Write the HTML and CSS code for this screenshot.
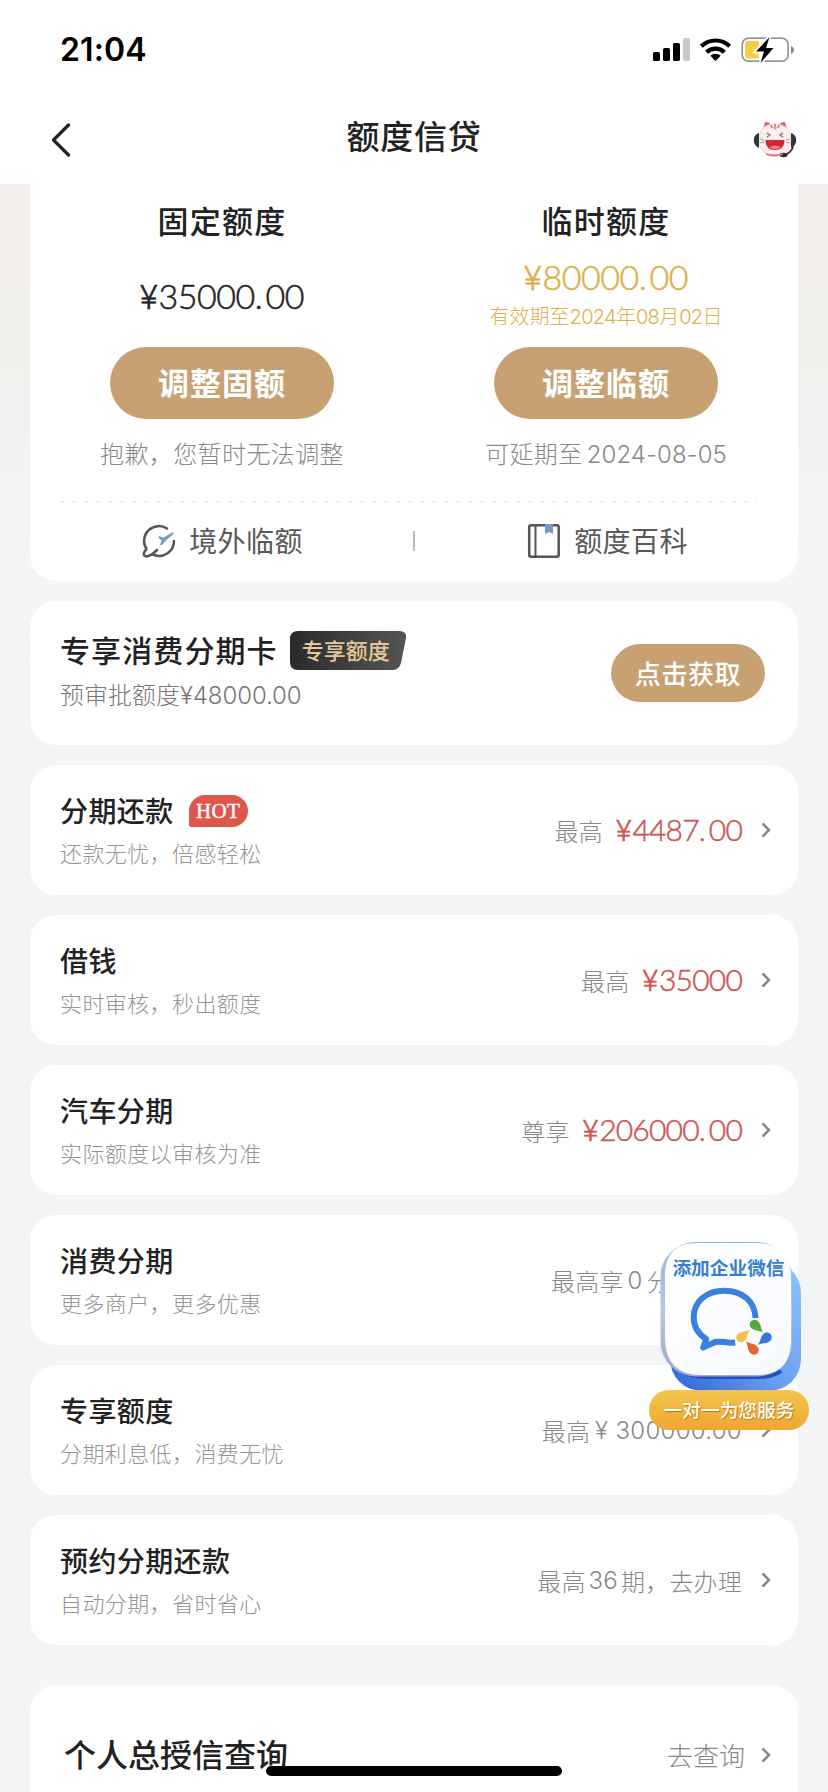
FILE: index.html
```html
<!DOCTYPE html>
<html lang="zh-CN">
<head>
<meta charset="utf-8">
<title>额度信贷</title>
<link rel="stylesheet" href="styles.css">
</head>
<body>
<div class="screen">
  <header class="header">
    <div class="status">
      <span class="clock">21:04</span>
      <svg class="status-icons" width="144" height="28" viewBox="0 0 144 28">
        <rect x="1" y="16" width="7" height="9" rx="1.6"/>
        <rect x="11" y="12" width="7" height="13" rx="1.6"/>
        <rect x="21" y="7" width="7" height="18" rx="1.6"/>
        <rect x="31" y="2" width="7" height="23" rx="1.6" fill="#c9c9c9"/>
        <g fill="none" stroke="#000" stroke-width="4.2">
          <path d="M49.3 10.2a20.5 20.5 0 0 1 28.4 0"/>
          <path d="M54.6 16.2a13 13 0 0 1 17.8 0"/>
        </g>
        <path d="M63.500 25l-5.200-5.200a7.500 7.500 0 0 1 10.400 0z"/>
        <rect x="90.200" y="2.200" width="46" height="23" rx="6.500" fill="#fff" stroke="#999" stroke-width="1.800"/>
        <path d="M96.500 5H107v17.500h-10.500a3.500 3.500 0 0 1-3.500-3.500V8.500a3.500 3.500 0 0 1 3.500-3.500z" fill="#f4ce46"/>
        <path d="M139 10c4 1.500 4 6.500 0 8z" fill="#888"/>
        <path d="M117.500 1L104 15.500h8L108.500 27 121.500 12h-7.500z" stroke="#fff" stroke-width="3.500" paint-order="stroke"/>
      </svg>
    </div>
    <div class="nav">
      <svg class="back" width="20" height="34" viewBox="0 0 20 34"><path d="M17.500 2L2.500 17l15 15" fill="none" stroke="#222" stroke-width="3.200" stroke-linecap="round" stroke-linejoin="round"/></svg>
      <h1 class="nav-title">额度信贷</h1>
      <svg class="mascot" width="44" height="38" viewBox="0 0 44 38">
        <path d="M10 9L12 2q5 0 7 4zM34 9L32 2q-5 0-7 4z" fill="#d9606c"/>
        <path d="M22 4C34 4 38 12 38 20s-5 15-16 15S6 29 6 20 10 4 22 4z" fill="#fbeeed" stroke="#f0d3d3" stroke-width=".8"/>
        <path d="M18 5l1 3M22 4v3M26 5l-1 3" stroke="#d9606c" stroke-width="1.500"/>
        <ellipse cx="22" cy="8" rx="1.500" ry="1.800" fill="#d6b162"/>
        <path d="M6 13c-7 2-7 12 0 15zM38 13c7 2 7 12 0 15z" fill="#35333a"/>
        <path d="M40 27q-2 6-9 8" fill="none" stroke="#35333a" stroke-width="1.800"/>
        <ellipse cx="30.500" cy="35" rx="4" ry="2.200" fill="#2d2a2e"/>
        <path d="M14 13l3 2-3 2M30 13l-3 2 3 2" fill="none" stroke="#666" stroke-width="1.100"/>
        <path d="M7 19l4 1M7 23l4-1M37 19l-4 1M37 23l-4-1" stroke="#888" stroke-width=".8"/>
        <path d="M12.500 20h19c0 7-4 10-9.500 10s-9.500-3-9.500-10z" fill="#cf2734"/>
        <path d="M16 27q6-3 12 0-6 4.500-12 0z" fill="#f07b80"/>
        <path d="M13 34q8 3 17 0" fill="none" stroke="#e2727a" stroke-width="1.800"/>
      </svg>
    </div>
  </header>

  <main class="content">
    <section class="card quota">
      <div class="quota-cols">
        <div class="quota-col">
          <h2 class="quota-name">固定额度</h2>
          <div class="quota-value"><div class="money"><span class="yen">¥</span>35000<span class="dot">.</span>00</div></div>
          <button class="btn-large">调整固额</button>
          <p class="quota-note">抱歉，您暂时无法调整</p>
        </div>
        <div class="quota-col">
          <h2 class="quota-name">临时额度</h2>
          <div class="quota-value gold"><div class="money"><span class="yen">¥</span>80000<span class="dot">.</span>00</div><div class="valid">有效期至<b>2024</b>年<b>08</b>月<b>02</b>日</div></div>
          <button class="btn-large">调整临额</button>
          <p class="quota-note">可延期至<span class="num date">2024-08-05</span></p>
        </div>
      </div>
      <svg class="dashes" width="698" height="2" viewBox="0 0 698 2"><path d="M0 1h698" stroke="#ececec" stroke-width="1.600" stroke-dasharray="5 7"/></svg>
      <div class="links">
        <a class="link">
          <svg width="34" height="36" viewBox="0 0 34 36" fill="none" stroke="#555" stroke-width="2.500" stroke-linecap="round" stroke-linejoin="round">
            <path d="M25 5.500A14.800 14.800 0 0 0 4.500 26c-3 3-3.500 6-1.500 7 3 1 8-2 12-6"/>
            <path d="M11 31.500A14.800 14.800 0 0 0 32 18"/>
            <path d="M17 13l4.500 1.500L31 9c1 1 .5 2-.5 3L24 17.500 20 22h-2l1.500-4.500L16.500 15z" fill="#789dc8" stroke="none"/>
          </svg>
          <span>境外临额</span>
        </a>
        <i class="split"></i>
        <a class="link">
          <svg width="34" height="36" viewBox="0 0 34 36">
            <rect x="2.200" y="2.200" width="29.500" height="31.500" rx="2" fill="none" stroke="#555" stroke-width="2.500"/>
            <path d="M8.500 2v31.500" stroke="#555" stroke-width="2"/>
            <path d="M18 1h8v10l-4-2-4 2z" fill="#7899c4"/>
          </svg>
          <span>额度百科</span>
        </a>
      </div>
    </section>

    <section class="card promo">
      <div class="promo-text">
        <div class="promo-head">
          <h2 class="promo-title">专享消费分期卡</h2>
          <span class="tag"><svg class="tag-bg" width="117" height="39" viewBox="0 0 117 39"><defs><linearGradient id="tagfill" x1="0" x2="1"><stop stop-color="#2a2a2a"/><stop offset="1" stop-color="#555"/></linearGradient></defs><path d="M8 0h101q8 0 7 7l-5 25q-2 7-8 7H8q-8 0-8-8V8q0-8 8-8z" fill="url(#tagfill)"/></svg><span class="tag-label">专享额度</span></span>
        </div>
        <p class="promo-sub">预审批额度<span class="num promo-num">¥48000.00</span></p>
      </div>
      <button class="btn-small">点击获取</button>
    </section>

    <section class="card row">
      <div class="row-text"><h3 class="row-title">分期还款<span class="hot">HOT</span></h3><p class="row-sub">还款无忧，倍感轻松</p></div>
      <div class="row-right"><span>最高</span><span class="amount"><span class="yen">¥</span>4487<span class="dot">.</span>00</span></div>
      <svg class="chev" width="10" height="16" viewBox="0 0 10 16"><path d="M1.500 1.500L8 8l-6.500 6.500"/></svg>
    </section>
    <section class="card row">
      <div class="row-text"><h3 class="row-title">借钱</h3><p class="row-sub">实时审核，秒出额度</p></div>
      <div class="row-right"><span>最高</span><span class="amount"><span class="yen">¥</span>35000</span></div>
      <svg class="chev" width="10" height="16" viewBox="0 0 10 16"><path d="M1.500 1.500L8 8l-6.500 6.500"/></svg>
    </section>
    <section class="card row">
      <div class="row-text"><h3 class="row-title">汽车分期</h3><p class="row-sub">实际额度以审核为准</p></div>
      <div class="row-right"><span>尊享</span><span class="amount"><span class="yen">¥</span>206000<span class="dot">.</span>00</span></div>
      <svg class="chev" width="10" height="16" viewBox="0 0 10 16"><path d="M1.500 1.500L8 8l-6.500 6.500"/></svg>
    </section>
    <section class="card row">
      <div class="row-text"><h3 class="row-title">消费分期</h3><p class="row-sub">更多商户，更多优惠</p></div>
      <div class="row-right covered">最高享<span class="num zero">0</span>分</div>
      <svg class="chev" width="10" height="16" viewBox="0 0 10 16"><path d="M1.500 1.500L8 8l-6.500 6.500"/></svg>
    </section>
    <section class="card row">
      <div class="row-text"><h3 class="row-title">专享额度</h3><p class="row-sub">分期利息低，消费无忧</p></div>
      <div class="row-right">最高<span class="num long">¥ 300000.00</span></div>
      <svg class="chev" width="10" height="16" viewBox="0 0 10 16"><path d="M1.500 1.500L8 8l-6.500 6.500"/></svg>
    </section>
    <section class="card row">
      <div class="row-text"><h3 class="row-title">预约分期还款</h3><p class="row-sub">自动分期，省时省心</p></div>
      <div class="row-right">最高<span class="num term">36</span>期，去办理</div>
      <svg class="chev" width="10" height="16" viewBox="0 0 10 16"><path d="M1.500 1.500L8 8l-6.500 6.500"/></svg>
    </section>

    <section class="card query">
      <h2 class="query-title">个人总授信查询</h2>
      <span class="query-go">去查询</span>
      <svg class="chev" width="10" height="16" viewBox="0 0 10 16"><path d="M1.500 1.500L8 8l-6.500 6.500"/></svg>
    </section>
  </main>

  <aside class="float">
    <svg class="float-art" width="162" height="152" viewBox="0 0 162 152">
      <defs>
        <linearGradient id="back" x1="0" y1="1" x2="1" y2="0"><stop stop-color="#2d62d8"/><stop offset=".45" stop-color="#6a9ff0"/><stop offset="1" stop-color="#8cc6fb"/></linearGradient>
        <linearGradient id="edge" x1="0" y1="0" x2="0" y2="1"><stop stop-color="#8fb4e6"/><stop offset=".5" stop-color="#b4c7e4"/><stop offset="1" stop-color="#9daccb"/></linearGradient>
        <linearGradient id="face" x1="0" y1="0" x2="1" y2="1"><stop stop-color="#fff"/><stop offset="1" stop-color="#f6f9fe"/></linearGradient>
      </defs>
      <rect x="21" y="20" width="131" height="130" rx="32" fill="url(#back)"/>
      <path d="M28 128q12 8 32 8h50q14 0 22-6" fill="none" stroke="#2450bd" stroke-width="4"/>
      <rect x="11.500" y="1" width="131.500" height="134.500" rx="35" fill="url(#edge)"/>
      <path d="M48 2H108Q142 2 142 36V100Q142 134 108 134H52Q17 134 16 98V34Q16 2 48 2z" fill="url(#face)"/>
      <path d="M106.500 77C106 60 93 49.700 75.500 49.700 57 49.700 44.700 61 44.700 76c0 10 4.500 17 12.500 22l-3 8.500 12-5.500c7-1.500 10 1.500 20 .5" fill="none" stroke="#3a80df" stroke-width="6" stroke-linejoin="round"/>
      <path d="M12 0C7 1 5 4.800 0 4.800A4.800 4.800 0 1 1 0-4.800C5-4.800 7-1 12 0z" transform="translate(105.500 83.500) rotate(43)" fill="#55a83b"/>
      <path d="M12 0C7 1 5 4.800 0 4.800A4.800 4.800 0 1 1 0-4.800C5-4.800 7-1 12 0z" transform="translate(118 96.300) rotate(140)" fill="#3577d8"/>
      <path d="M12 0C7 1 5 4.800 0 4.800A4.800 4.800 0 1 1 0-4.800C5-4.800 7-1 12 0z" transform="translate(105 109) rotate(226)" fill="#e3652d"/>
      <path d="M12 0C7 1 5 4.800 0 4.800A4.800 4.800 0 1 1 0-4.800C5-4.800 7-1 12 0z" transform="translate(92 96.500) rotate(-41)" fill="#f4c24d"/>
    </svg>
    <span class="float-title">添加企业微信</span>
    <span class="float-pill">一对一为您服务</span>
  </aside>
  <i class="home-bar"></i>
</div>
</body>
</html>
```
FILE: styles.css
```css
* { box-sizing: border-box; }
body, h1, h2, h3, p { margin: 0; font-weight: inherit; }
body { background: #f4f5f7; font-family: "Noto Sans CJK SC", sans-serif; color: #222; }
.screen {
  position: relative; width: 828px; height: 1792px; overflow: hidden;
  display: flex; flex-direction: column;
  background: linear-gradient(#f4efed 184px, #f1f0ed 340px, #f5f5f5 560px, #f4f4f4 760px, #f2f4f6 780px, #f2f4f6 1650px, #f5f5f5 1670px);
}
.header { flex: none; height: 184px; background: #fff; }
.status { height: 96px; padding: 7px 30px 0 60px; display: flex; align-items: center; justify-content: space-between; }
.clock { font: 600 32px/40px Inter, sans-serif; letter-spacing: .1px; color: #000; margin-top: -4px; }
.status-icons { margin: -4px 2px 0 0; }
.nav { height: 88px; padding: 0 32px 0 51px; display: grid; grid-template-columns: 44px 1fr 44px; align-items: center; }
.nav-title { text-align: center; font-size: 33px; font-weight: 500; line-height: 48px; letter-spacing: .8px; margin: -11px 0 0 -19px; }
.mascot { margin: -2px 0 0 1px; }
.content { display: flex; flex-direction: column; gap: 20px; padding: 0 30px; }
.card { background: #fff; border-radius: 26px; flex: none; }
button { border: 0; padding: 0; font-family: inherit; color: #fff; background: #c7a172; border-radius: 99px; }

.quota { height: 397px; border-radius: 0 0 26px 26px; }
.quota-cols { display: grid; grid-template-columns: 1fr 1fr; }
.quota-col { display: flex; flex-direction: column; align-items: center; }
.quota-name { margin-top: 12px; font-size: 31px; line-height: 48px; font-weight: 500; letter-spacing: 1.200px; }
.quota-value { height: 103px; padding-top: 2px; display: flex; flex-direction: column; align-items: center; justify-content: center; }
.quota-value.gold { padding: 0 0 3px; color: #dcb04b; }
.money { font: 300 34px/40px Lato, sans-serif; letter-spacing: -.5px; white-space: nowrap; -webkit-text-stroke: .5px currentColor; }
.dot { letter-spacing: 3px; }
.yen { font-family: Roboto, sans-serif; font-weight: 300; letter-spacing: 1px; }
.valid { font-size: 20px; line-height: 30px; font-weight: 300; margin-top: 3px; white-space: nowrap; }
.valid b { font-family: Inter, sans-serif; font-weight: 300; letter-spacing: -.7px; }
.btn-large { width: 224px; height: 72px; padding-bottom: 3px; font-size: 31px; font-weight: 700; letter-spacing: 1px; }
.quota-note { margin-top: 16px; font-size: 24px; line-height: 36px; font-weight: 300; letter-spacing: .4px; color: #888; }
.num { font-family: Inter, sans-serif; font-weight: 300; }
.date { margin-left: 4px; letter-spacing: .1px; }
.dashes { display: block; margin: 28px 0 0 30px; }
.links { display: grid; grid-template-columns: 1fr 2px 1fr; align-items: center; height: 76px; }
.link { display: flex; justify-content: center; align-items: center; gap: 13px; padding-left: 2px; font-size: 28px; line-height: 40px; letter-spacing: .4px; font-weight: 400; color: #5a5a5a; }
.link span { margin-top: -2px; }
.split { height: 20px; background: #bbb; }

.promo { height: 144px; padding: 0 33px 0 30px; display: flex; justify-content: space-between; align-items: center; }
.promo-head { display: flex; align-items: center; gap: 12px; height: 44px; }
.promo-title { margin-top: -2px; font-size: 30px; font-weight: 500; letter-spacing: 1.100px; }
.tag { position: relative; width: 117px; height: 39px; display: block; }
.tag-bg { position: absolute; inset: 0; }
.tag-label { position: relative; display: block; padding-left: 12px; font-size: 22px; line-height: 37px; font-weight: 500; color: #e6c69c; }
.promo-sub { font-size: 24px; line-height: 36px; margin-top: 4px; font-weight: 300; color: #777; }
.promo-num { letter-spacing: -.1px; }
.promo-text { margin-top: -4px; }
.btn-small { width: 154px; height: 58px; padding-bottom: 2px; font-size: 26px; font-weight: 500; letter-spacing: .6px; }

.row { height: 130px; padding: 0 27px 0 30px; display: flex; align-items: center; }
.row-text { flex: 1; margin-top: -3px; }
.row-title { display: flex; align-items: center; font-size: 28px; line-height: 42px; font-weight: 500; letter-spacing: .4px; }
.row-sub { font-size: 22px; line-height: 34px; margin-top: 4px; font-weight: 300; letter-spacing: .4px; color: #959595; }
.hot { width: 59px; height: 32px; margin: 2px 0 0 15px; border-radius: 16px 16px 16px 2px; background: #df564d; color: #fff; font: 400 21px/32px "Liberation Serif", serif; letter-spacing: .3px; text-align: center; -webkit-text-stroke: .4px #fff; }
.row-right { display: flex; align-items: center; font-size: 24px; font-weight: 300; letter-spacing: .2px; color: #888; white-space: nowrap; margin-top: 0; }
.amount { margin-left: 13px; font: 300 30px/38px Lato, sans-serif; letter-spacing: -.8px; color: #cd5654; -webkit-text-stroke: .5px currentColor; }
.covered { width: 191px; }
.zero { margin: 0 4px; }
.long { margin-left: 5px; letter-spacing: .3px; }
.term { margin: 0 3px; }
.chev { margin-left: 19px; fill: none; stroke: #888; stroke-width: 2.500; }

.query { height: 140px; margin-top: 20px; padding: 0 27px 0 34px; display: flex; align-items: center; border-radius: 26px 26px 0 0; }
.query-title { flex: 1; font-size: 32px; line-height: 48px; font-weight: 500; margin-top: -4px; }
.query-go { font-size: 26px; line-height: 40px; font-weight: 300; color: #888; margin-top: -1px; }
.query .chev { margin-left: 16px; }

.float { position: absolute; left: 649px; top: 1241px; width: 160px; height: 190px; }
.float-art { position: absolute; left: 0; top: 0; }
.float-title { position: absolute; left: 22px; top: 12px; width: 115px; text-align: center; font-size: 18.700px; line-height: 28px; font-weight: 700; color: #397fce; white-space: nowrap; }
.float-pill { position: absolute; left: 0; top: 149px; width: 160px; height: 40px; border-radius: 20px; background: linear-gradient(#f3c64d, #f0a530); color: #fff; font-size: 18.700px; line-height: 38px; font-weight: 500; text-align: center; text-shadow: 1px 1px 1px #b87618; white-space: nowrap; }
.home-bar { position: absolute; left: 266px; top: 1766px; width: 296px; height: 10px; border-radius: 5px; background: #000; }
```
